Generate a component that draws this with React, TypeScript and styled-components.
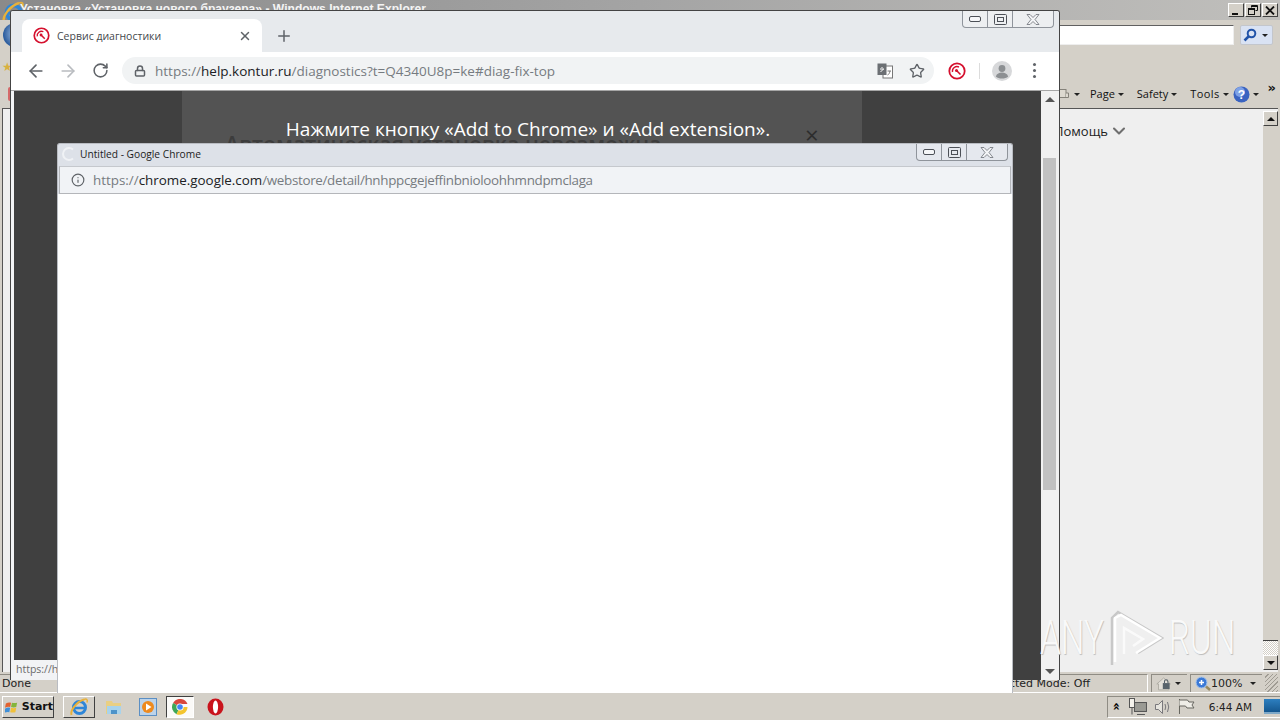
import styled, { createGlobalStyle } from "styled-components"
import { ArrowLeft, ArrowRight, ChevronDown, Info, Lock, Plus, RotateCw, Star, X } from "lucide-react"

const Sans = `"Open Sans", "Liberation Sans", sans-serif`
const Classic = `"DejaVu Sans", "Liberation Sans", sans-serif`
const ClassicGray = "#d4d0c8"

const GlobalStyle = createGlobalStyle`
  html, body {
    margin: 0;
    width: 1280px;
    height: 720px;
    overflow: hidden;
    background: ${ClassicGray};
  }
`

const KonturIcon = ({ size = 18 }: { size?: number }) => (
  <svg width={size} height={size} viewBox="0 0 18 18" fill="none">
    <circle cx="9" cy="9" r="7.700" stroke="#d5102e" strokeWidth="1.800" />
    <path d="M4.500 10a4.600 4.600 0 0 1 6.500-5" stroke="#d5102e" strokeWidth="1.400" />
    <circle cx="8.500" cy="8.500" r="1.500" fill="#d5102e" />
    <path d="M8.500 8.500l4 4" stroke="#d5102e" strokeWidth="1.600" />
  </svg>
)

const TranslateIcon = () => (
  <svg width="16" height="16" viewBox="0 0 16 16">
    <rect x="6" y="3" width="9.500" height="12" fill="#fff" stroke="#777" />
    <rect x="0.500" y="0.500" width="9" height="11.500" fill="#6b6f73" />
    <path d="M3 6h4M5 4v1M3.500 9l3-3" stroke="#fff" strokeWidth="1" fill="none" />
    <path d="M10.500 8h3.500M13 8c-.5 2-1 3.500-2.500 4" stroke="#777" strokeWidth="1" fill="none" />
  </svg>
)

const AvatarIcon = () => (
  <svg width="20" height="20" viewBox="0 0 20 20">
    <circle cx="10" cy="10" r="10" fill="#d7d8da" />
    <circle cx="10" cy="7.500" r="3.400" fill="#8c8f92" />
    <path d="M3.800 15.500c1-3 3.500-4 6.200-4s5.200 1 6.200 4c-1.600 1.400-3.800 2-6.200 2s-4.600-.6-6.200-2z" fill="#8c8f92" />
  </svg>
)

const MinGlyph = () => (
  <svg width="12" height="6" viewBox="0 0 12 6" fill="none">
    <rect x="0.500" y="0.500" width="11" height="5" rx="1.500" stroke="#4c5057" fill="#f5f6f8" />
  </svg>
)

const MaxGlyph = () => (
  <svg width="13" height="11" viewBox="0 0 13 11" fill="none">
    <rect x="0.500" y="0.500" width="12" height="10" rx="1" stroke="#4c5057" />
    <rect x="3.500" y="3.500" width="6" height="4" stroke="#4c5057" />
  </svg>
)

const CloseGlyph = () => (
  <svg width="14" height="11" viewBox="0 0 14 11" fill="#f4f5f7" stroke="#6c7077" strokeWidth="0.800">
    <path d="M1 .5h3l3 3 3-3h3L9 5.500l4 5h-3L7 7.500l-3 3H1l4-5z" />
  </svg>
)

const SpinnerIcon = () => (
  <svg width="14" height="14" viewBox="0 0 14 14" fill="none">
    <path d="M11 2.500A6 6 0 1 0 11 11.500" stroke="#f0f2f5" strokeWidth="2" />
  </svg>
)

const IeLogo = ({ size = 18 }: { size?: number }) => (
  <svg width={size} height={size} viewBox="0 0 20 20" fill="none">
    <circle cx="10.500" cy="10.500" r="6" stroke="#2e86d8" strokeWidth="3" />
    <path d="M4 11h13" stroke="#2e86d8" strokeWidth="2.500" />
    <path d="M2.500 18C1 14 7 5 15 2.500" stroke="#e8b13a" strokeWidth="2" />
    <path d="M15 2.500c2.500-1 4 0 3 3" stroke="#e8b13a" strokeWidth="1.500" />
  </svg>
)

const WinLogo = () => (
  <svg width="17" height="16" viewBox="0 0 17 16">
    <path d="M1 4q3-2 6-1l-1 5q-3-1-6 1z" fill="#e2622f" />
    <path d="M8 3q3 1 6 0l-1 5q-3 1-6 0z" fill="#84b53c" />
    <path d="M0 10q3-2 6-1l-1 5q-3-1-6 1z" fill="#3f8fd8" />
    <path d="M7 9q3 1 6 0l-1 5q-3 1-6 0z" fill="#f0c03a" />
  </svg>
)

const FolderIcon = () => (
  <svg width="18" height="18" viewBox="0 0 18 18">
    <path d="M1 3h6l1 2h8v11H1z" fill="#e9cf83" />
    <path d="M2 8h14v8H2z" fill="#a8d3ec" />
    <path d="M6 16v-4h6v4" fill="#4d93c9" />
  </svg>
)

const MediaIcon = () => (
  <svg width="18" height="18" viewBox="0 0 18 18">
    <rect x="0.500" y="0.500" width="17" height="17" fill="#bcd3ea" stroke="#5b8fc4" />
    <circle cx="9" cy="9" r="6" fill="#ee8a1e" />
    <path d="M7 5.500v7l5.500-3.500z" fill="#fff" />
  </svg>
)

const ChromeLogo = () => (
  <svg width="16" height="16" viewBox="0 0 16 16">
    <path d="M8 8L1.100 4A8 8 0 0 1 15.500 5H8z" fill="#d9473c" />
    <path d="M8 8l-3.500 7.200A8 8 0 0 1 1.100 4z" fill="#3fa757" />
    <path d="M8 8h7.500A8 8 0 0 1 4.500 15.200z" fill="#f4c52e" />
    <circle cx="8" cy="8" r="3.600" fill="#fff" />
    <circle cx="8" cy="8" r="2.800" fill="#4285f4" />
  </svg>
)

const OperaLogo = () => (
  <svg width="17" height="18" viewBox="0 0 17 18">
    <ellipse cx="8.500" cy="9" rx="8" ry="8.500" fill="#c9131c" />
    <ellipse cx="8.500" cy="9" rx="2.600" ry="6.500" fill="#fff" />
  </svg>
)

const NetworkIcon = () => (
  <svg width="20" height="18" viewBox="0 0 20 18" fill="none" stroke="#555">
    <rect x="6.500" y="4.500" width="12" height="9" fill="#9a9a94" />
    <path d="M9 16.500h8" />
    <rect x="1.500" y="0.500" width="5" height="9" fill="#f4f2ec" />
    <path d="M4 9.500v7" />
  </svg>
)

const SpeakerIcon = () => (
  <svg width="18" height="16" viewBox="0 0 18 16" fill="none" stroke="#77767a">
    <path d="M1.500 5.500h3l4-4v13l-4-4h-3z" fill="#e6e4de" />
    <path d="M11 5q1.500 3 0 6M13.500 3q2.500 5 0 10" />
  </svg>
)

const FlagIcon = () => (
  <svg width="18" height="17" viewBox="0 0 18 17" fill="none" stroke="#66655f">
    <path d="M1.500 1v15" />
    <path d="M1.500 2h8l1.500 2h5l-2 3 2 3H9L7.500 8h-6" fill="#efede7" />
  </svg>
)

const HelpIcon = () => (
  <svg width="17" height="17" viewBox="0 0 17 17">
    <circle cx="8.500" cy="8.500" r="8" fill="#3a63c0" />
    <circle cx="7" cy="6" r="5" fill="#7ea1e6" />
    <text x="8.500" y="13" textAnchor="middle" fontSize="12" fontWeight="700" fill="#fff" fontFamily="Liberation Sans">?</text>
  </svg>
)

const SearchGlyph = () => (
  <svg width="14" height="14" viewBox="0 0 14 14" fill="none" stroke="#2052a8" strokeWidth="2">
    <circle cx="8.500" cy="5.500" r="3.800" />
    <path d="M5.500 8.500L1.500 12.500" strokeWidth="2.500" />
  </svg>
)

const ZoomGlyph = () => (
  <svg width="17" height="15" viewBox="0 0 17 15">
    <circle cx="6.500" cy="6.500" r="5.500" fill="#3b79d6" stroke="#a8c5ea" />
    <path d="M4 6.500h5M6.500 4v5" stroke="#fff" strokeWidth="1.500" />
    <path d="M11 10.500l4 3.500" stroke="#9a8a60" strokeWidth="2.500" />
  </svg>
)

const LockHomeGlyph = () => (
  <svg width="20" height="17" viewBox="0 0 20 17">
    <path d="M1 9l8-7 8 7h-2v7H3V9z" fill="#e4e1da" stroke="#a9a69e" />
    <rect x="8" y="8" width="8" height="7" fill="#59646c" />
    <path d="M10 8V6a2 2 0 0 1 4 0v2" stroke="#59646c" strokeWidth="1.200" fill="none" />
  </svg>
)

const RestoreGlyph = () => (
  <svg width="10" height="10" viewBox="0 0 10 10" fill="none" stroke="#111">
    <path d="M3.500 2.500V.5h6v5H7.500" />
    <path d="M3.500 1.500h6" />
    <rect x="0.500" y="3.500" width="6" height="6" />
    <path d="M.5 4.500h6" />
  </svg>
)

const ClassicCloseGlyph = () => (
  <svg width="10" height="9" viewBox="0 0 10 9" stroke="#111" strokeWidth="1.800">
    <path d="M1 .5l8 8M9 .5l-8 8" />
  </svg>
)

const ClassicMinGlyph = () => (
  <svg width="10" height="10" viewBox="0 0 10 10">
    <rect x="1" y="8" width="6" height="2" fill="#111" />
  </svg>
)

const PrintGlyph = () => (
  <svg width="9" height="14" viewBox="0 0 9 14" fill="#ddd9d0" stroke="#85827a">
    <rect x="-6" y="2.500" width="12" height="8" />
    <path d="M6 10.500h2.500V6H6" />
  </svg>
)

const WatermarkPlay = () => (
  <svg width="54" height="56" viewBox="0 0 54 56" fill="none" stroke="#fff" strokeWidth="2.500">
    <path d="M2 55V8L8 2l44 26-24 15" stroke="#c8c8c8" />
    <path d="M5 52V8l6-3 39 23-24 15" />
    <path d="M14 44V18l19 11-10 7" strokeOpacity="0.7" />
  </svg>
)

const Caption = () => (
  <CaptionGroup>
    <CaptionButton $w={24}><MinGlyph /></CaptionButton>
    <CaptionButton $w={25}><MaxGlyph /></CaptionButton>
    <CaptionButton $w={41}><CloseGlyph /></CaptionButton>
  </CaptionGroup>
)

export default function App() {
  return (
    <>
      <GlobalStyle />
      <Desktop>
        <IeWindow>
          <IeTitleBar>
            <IeLogoSlot><IeLogo size={24} /></IeLogoSlot>
            <IeTitle>Установка «Установка нового браузера» - Windows Internet Explorer</IeTitle>
            <ClassicButtons>
              <ClassicButton><ClassicMinGlyph /></ClassicButton>
              <ClassicButton><RestoreGlyph /></ClassicButton>
              <ClassicButton><ClassicCloseGlyph /></ClassicButton>
            </ClassicButtons>
          </IeTitleBar>
          <AddressRow>
            <BackOrb />
            <SearchInput />
            <SearchButton>
              <SearchGlyph />
              <TinyCaret />
            </SearchButton>
          </AddressRow>
          <FavRow>
            <FavStar>★</FavStar>
          </FavRow>
          <CommandRow>
            <RedTab />
            <PrintItem>
              <PrintGlyph />
              <TinyCaret />
            </PrintItem>
            <CommandItems>
              <CommandItem>Page<TinyCaret /></CommandItem>
              <CommandItem>Safety<TinyCaret /></CommandItem>
              <CommandItem>Tools<TinyCaret /></CommandItem>
              <CommandItem><HelpIcon /><TinyCaret /></CommandItem>
              <MoreChevrons>»</MoreChevrons>
            </CommandItems>
          </CommandRow>
          <IeBody>
            <IePage>
              <HelpLink>Помощь<ChevronDown size={20} strokeWidth={2.500} color="#6f6f6f" /></HelpLink>
            </IePage>
            <IeScrollbar>
              <ScrollArrow $dir="up" />
              <IeTrack />
              <IeChecker />
              <ScrollArrow $dir="down" />
            </IeScrollbar>
          </IeBody>
          <StatusBar>
            <StatusMain>
              <span>Done</span>
              <ProtectedMode>Protected Mode: Off</ProtectedMode>
            </StatusMain>
            <StatusCell $w={36}><LockHomeGlyph /><TinyCaret /></StatusCell>
            <StatusCell $w={72}>
              <ZoomGlyph />
              <ZoomValue>100%</ZoomValue>
              <TinyCaret />
            </StatusCell>
            <Grip />
          </StatusBar>
        </IeWindow>

        <Taskbar>
          <StartButton><WinLogo />Start</StartButton>
          <QuickButton><IeLogo size={20} /></QuickButton>
          <QuickIcon><FolderIcon /></QuickIcon>
          <QuickIcon><MediaIcon /></QuickIcon>
          <ActiveTask><ChromeLogo /></ActiveTask>
          <QuickIcon><OperaLogo /></QuickIcon>
          <Tray>
            <TrayChevrons>»</TrayChevrons>
            <NetworkIcon />
            <SpeakerIcon />
            <FlagIcon />
            <Clock>6:44 AM</Clock>
            <ShowDesktop />
          </Tray>
        </Taskbar>

        <ChromeWindow>
          <TabStrip>
            <Tab>
              <KonturIcon size={17} />
              <TabTitle>Сервис диагностики</TabTitle>
              <X size={14} strokeWidth={2.500} color="#5f6368" />
            </Tab>
            <NewTab><Plus size={18} strokeWidth={2} color="#5f6368" /></NewTab>
            <CaptionSlot $right={5}><Caption /></CaptionSlot>
          </TabStrip>
          <Toolbar>
            <NavIcon><ArrowLeft size={20} strokeWidth={2} color="#5f6368" /></NavIcon>
            <NavIcon><ArrowRight size={20} strokeWidth={2} color="#b9bcc0" /></NavIcon>
            <NavIcon><RotateCw size={17} strokeWidth={2.200} color="#5f6368" /></NavIcon>
            <Omnibox>
              <Lock size={12} strokeWidth={3} color="#5f6368" />
              <UrlText><Dim>https://</Dim>help.kontur.ru<Dim>/diagnostics?t=Q4340U8p=ke#diag-fix-top</Dim></UrlText>
              <TranslateIcon />
              <OmniStar><Star size={16} strokeWidth={2} color="#5f6368" /></OmniStar>
            </Omnibox>
            <ToolbarIcons>
              <KonturIcon />
              <ToolbarDivider />
              <AvatarIcon />
              <MenuDots><i /><i /><i /></MenuDots>
            </ToolbarIcons>
          </Toolbar>
          <PageArea>
            <PageDark>
              <Modal>
                <Instruction>Нажмите кнопку «Add to Chrome» и «Add extension».</Instruction>
                <BehindHeading>Автоматическая установка невозможна</BehindHeading>
                <BehindClose>×</BehindClose>
              </Modal>
            </PageDark>
            <PageScrollbar>
              <PageArrow $dir="up" />
              <PageTrack><PageThumb /></PageTrack>
              <PageArrow $dir="down" />
            </PageScrollbar>
          </PageArea>
        </ChromeWindow>

        <LinkTooltip>https://h</LinkTooltip>

        <Popup>
          <PopupTitleBar>
            <SpinnerIcon />
            <PopupTitle>Untitled - Google Chrome</PopupTitle>
            <CaptionSlot $right={4}><Caption /></CaptionSlot>
          </PopupTitleBar>
          <PopupAddress>
            <Info size={14} strokeWidth={2} color="#5f6368" />
            <PopupUrl><Dim>https://</Dim>chrome.google.com<PopupPath>/webstore/detail/hnhppcgejeffinbnioloohhmndpmclaga</PopupPath></PopupUrl>
          </PopupAddress>
          <PopupBody />
        </Popup>

        <Watermark>
          <WatermarkWord>ANY</WatermarkWord>
          <WatermarkPlay />
          <WatermarkWord>RUN</WatermarkWord>
        </Watermark>
      </Desktop>
    </>
  )
}

const Desktop = styled.div`
  position: relative;
  width: 1280px;
  height: 720px;
  overflow: hidden;
  display: flex;
  flex-direction: column;
  background: ${ClassicGray};
  font-family: ${Classic};
`

const IeWindow = styled.div`
  flex: 1;
  min-height: 0;
  display: flex;
  flex-direction: column;
`

const IeTitleBar = styled.div`
  height: 20px;
  flex: none;
  display: flex;
  padding-right: 2px;
  background: linear-gradient(90deg, #8a8a8a, #a4a4a4 50%, #c0bfbc);
  overflow: hidden;
`

const IeLogoSlot = styled.div`
  width: 20px;
  flex: none;
  padding-left: 1px;
  box-sizing: border-box;
`

const IeTitle = styled.div`
  flex: 1;
  color: #f4f4f4;
  font: bold 12.100px/18px "Liberation Sans", sans-serif;
  white-space: nowrap;
`

const ClassicButtons = styled.div`
  display: flex;
  gap: 1px;
  padding-top: 3px;
  height: 14px;
`

const ClassicButton = styled.div`
  width: 16px;
  height: 14px;
  background: ${ClassicGray};
  border: 1px solid;
  border-color: #fff #404040 #404040 #fff;
  box-sizing: border-box;
  display: flex;
  align-items: center;
  justify-content: center;
`

const AddressRow = styled.div`
  height: 30px;
  flex: none;
  display: flex;
  align-items: center;
  padding: 0 7px 0 3px;
`

const BackOrb = styled.div`
  width: 24px;
  height: 24px;
  border-radius: 50%;
  background: radial-gradient(circle at 60% 45%, #bcd5f2, #2f5f9f 70%);
`

const SearchInput = styled.div`
  flex: 1;
  height: 18px;
  margin: 0 6px 0 0;
  background: #fff;
  border: 1px solid;
  border-color: #606060 #eeeeee #eeeeee #606060;
`

const SearchButton = styled.div`
  width: 33px;
  height: 20px;
  box-sizing: border-box;
  display: flex;
  align-items: center;
  justify-content: space-around;
  background: #d9e2f3;
  border: 1px solid #c3c6cc;
  border-radius: 2px;
`

const TinyCaret = styled.span`
  display: inline-block;
  width: 0;
  height: 0;
  margin: 0 2px;
  border-left: 3px solid transparent;
  border-right: 3px solid transparent;
  border-top: 3px solid #222;
`

const FavRow = styled.div`
  height: 28px;
  flex: none;
  padding-left: 2px;
  box-sizing: border-box;
`

const FavStar = styled.div`
  color: #d9b13f;
  font-size: 12px;
  line-height: 34px;
`

const CommandRow = styled.div`
  height: 30px;
  flex: none;
  display: flex;
  align-items: center;
  padding-top: 2px;
  box-sizing: border-box;
`

const RedTab = styled.div`
  width: 3px;
  height: 14px;
  margin-left: 8px;
  border-radius: 2px 0 0 2px;
  background: #d56a6a;
`

const PrintItem = styled.div`
  margin-left: 1049px;
  display: flex;
  align-items: center;
  gap: 3px;
`

const CommandItems = styled.div`
  margin-left: auto;
  display: flex;
  align-items: center;
  gap: 11px;
  padding-right: 4px;
  font: 11px/16px ${Sans};
  color: #111;
`

const CommandItem = styled.div`
  display: flex;
  align-items: center;
  gap: 1px;

  &:nth-child(3) {
    margin-right: -9px;
    letter-spacing: 0.4px;
  }
`

const MoreChevrons = styled.div`
  font: bold 13px/13px ${Classic};
  margin: -14px 0 0 -4px;
`

const IeBody = styled.div`
  flex: 1;
  min-height: 0;
  display: flex;
  margin: 0 2px 2px 2px;
  border-top: 1px solid #555;
  border-left: 1px solid #555;
  background: #efefef;
`

const IePage = styled.div`
  flex: 1;
  padding: 12px 0 0 1051px;
  box-sizing: border-box;
`

const HelpLink = styled.div`
  display: flex;
  align-items: center;
  gap: 1px;
  font: 13px/18px ${Sans};
  color: #222;
`

const IeScrollbar = styled.div`
  width: 15px;
  flex: none;
  display: flex;
  flex-direction: column;
  background: ${ClassicGray};
  margin: 2px 0;
`

const ScrollArrow = styled.div<{ $dir: "up" | "down" }>`
  height: 13px;
  flex: none;
  background: ${ClassicGray};
  border: 1px solid;
  border-color: #fff #404040 #404040 #fff;
  display: flex;
  align-items: center;
  justify-content: center;
  &::after {
    content: "";
    border-left: 4px solid transparent;
    border-right: 4px solid transparent;
    ${(p) => (p.$dir === "up" ? "border-bottom: 4px solid #111;" : "border-top: 4px solid #111;")}
  }
`

const IeTrack = styled.div`
  flex: 1;
  background: ${ClassicGray};
  border-bottom: 1px solid #404040;
`

const IeChecker = styled.div`
  height: 14px;
  flex: none;
  background: repeating-conic-gradient(#fff 0 25%, ${ClassicGray} 0 50%) 0 0 / 2px 2px;
`

const StatusBar = styled.div`
  height: 18px;
  flex: none;
  display: flex;
  gap: 3px;
  font: 11px/18px ${Classic};
  color: #222;
  padding-right: 2px;
`

const StatusMain = styled.div`
  width: 1148px;
  flex: none;
  box-sizing: border-box;
  padding: 0 57px 0 2px;
  display: flex;
  justify-content: space-between;
  border-top: 1px solid #8f8c84;
  border-right: 1px solid #fff;
`

const ProtectedMode = styled.span`
  white-space: nowrap;
`

const StatusCell = styled.div<{ $w: number }>`
  width: ${(p) => p.$w}px;
  flex: none;
  display: flex;
  align-items: center;
  justify-content: space-between;
  padding: 0 4px 0 4px;
  box-sizing: border-box;
  border-top: 1px solid #8f8c84;
  border-left: 1px solid #8f8c84;
`

const ZoomValue = styled.span`
  margin: 0 auto 0 -1px;
`

const Grip = styled.div`
  flex: 1;
  background: repeating-linear-gradient(135deg, transparent 0 2px, #a09c94 2px 3px);
`

const Taskbar = styled.div`
  height: 28px;
  flex: none;
  box-sizing: border-box;
  border-top: 1px solid #fff;
  display: flex;
  align-items: center;
  padding: 0 0 0 2px;
  background: ${ClassicGray};
`

const StartButton = styled.div`
  width: 52px;
  height: 22px;
  box-sizing: border-box;
  display: flex;
  align-items: center;
  gap: 2px;
  padding-left: 2px;
  border: 1px solid;
  border-color: #fff #404040 #404040 #fff;
  font: bold 11px/20px ${Classic};
  color: #111;
`

const QuickButton = styled.div`
  width: 32px;
  height: 22px;
  margin-left: 9px;
  box-sizing: border-box;
  display: flex;
  align-items: center;
  justify-content: center;
  border: 1px solid;
  border-color: #fff #404040 #404040 #fff;
`

const QuickIcon = styled.div`
  width: 18px;
  height: 20px;
  margin-left: 10px;
  display: flex;
  align-items: center;
  justify-content: center;

  & + & {
    margin-left: 16px;
  }
`

const ActiveTask = styled.div`
  width: 28px;
  height: 22px;
  margin: 0 2px 0 9px;
  box-sizing: border-box;
  display: flex;
  align-items: center;
  justify-content: center;
  background: #fbfaf8;
  border: 1px solid;
  border-color: #404040 #fff #fff #404040;
`

const Tray = styled.div`
  margin-left: auto;
  width: 173px;
  height: 22px;
  box-sizing: border-box;
  display: flex;
  align-items: center;
  gap: 6px;
  padding-left: 2px;
  border: 1px solid;
  border-color: #8f8c84 #fff #fff #8f8c84;
  border-right: none;
`

const TrayChevrons = styled.div`
  transform: rotate(-90deg);
  font: bold 13px/13px ${Classic};
  width: 12px;
  text-align: center;
`

const Clock = styled.div`
  margin-left: 7px;
  font: 10.500px/16px ${Classic};
  color: #222;
  white-space: nowrap;
`

const ShowDesktop = styled.div`
  width: 16px;
  height: 13px;
  margin-left: 6px;
  background: linear-gradient(#2d7fc0, #15578f);
  border-bottom: 2px solid #7fa9c8;
`

const ChromeWindow = styled.div`
  position: absolute;
  left: 10px;
  top: 10px;
  width: 1050px;
  height: 670px;
  box-sizing: border-box;
  display: flex;
  flex-direction: column;
  background: #f3f4f6;
  border: 1px solid #444;
  border-bottom: none;
  border-radius: 3px 3px 0 0;
  overflow: hidden;
`

const TabStrip = styled.div`
  height: 41px;
  flex: none;
  position: relative;
  display: flex;
  align-items: flex-end;
  padding-left: 11px;
  background: #e7eaed;
`

const Tab = styled.div`
  width: 240px;
  height: 33px;
  box-sizing: border-box;
  display: flex;
  align-items: center;
  padding: 0 10px 0 11px;
  background: #fff;
  border-radius: 8px 8px 0 0;
`

const TabTitle = styled.div`
  flex: 1;
  margin-left: 7px;
  font: 10.500px/16px ${Sans};
  color: #45484c;
  white-space: nowrap;
`

const NewTab = styled.div`
  width: 18px;
  height: 33px;
  margin-left: 13px;
  display: flex;
  align-items: center;
  justify-content: center;
`

const CaptionSlot = styled.div<{ $right: number }>`
  position: absolute;
  top: 0;
  right: ${(p) => p.$right}px;
`

const CaptionGroup = styled.div`
  display: flex;
  height: 17px;
  box-sizing: border-box;
  background: rgba(255, 255, 255, 0.25);
  border: 1px solid #8f949b;
  border-top: none;
  border-radius: 0 0 4px 4px;
`

const CaptionButton = styled.div<{ $w: number }>`
  width: ${(p) => p.$w}px;
  box-sizing: border-box;
  display: flex;
  align-items: center;
  justify-content: center;

  & + & {
    border-left: 1px solid #8f949b;
  }
`

const Toolbar = styled.div`
  height: 39px;
  flex: none;
  box-sizing: border-box;
  display: flex;
  align-items: center;
  padding: 0 15px 1px 9px;
  background: #fff;
  border-bottom: 1px solid #a6a6a6;
`

const NavIcon = styled.div`
  width: 32px;
  display: flex;
  justify-content: center;
`

const Omnibox = styled.div`
  width: 812px;
  height: 27px;
  flex: none;
  margin-left: 6px;
  box-sizing: border-box;
  display: flex;
  align-items: center;
  padding: 0 9px 0 12px;
  background: #f1f3f4;
  border-radius: 14px;
`

const UrlText = styled.div`
  flex: 1;
  margin-left: 9px;
  font: 13.500px/18px ${Sans};
  color: #202124;
  white-space: nowrap;
  overflow: hidden;
`

const OmniStar = styled.div`
  display: flex;
  margin-left: 16px;
`

const Dim = styled.span`
  color: #767b80;
`

const ToolbarIcons = styled.div`
  flex: 1;
  display: flex;
  align-items: center;
  padding-left: 14px;
`

const ToolbarDivider = styled.div`
  width: 1px;
  height: 16px;
  margin: 0 12px 0 13px;
  background: #dcdcdc;
`

const MenuDots = styled.div`
  margin-left: 21px;
  display: flex;
  flex-direction: column;
  gap: 3px;

  i {
    display: block;
    width: 3px;
    height: 3px;
    border-radius: 50%;
    background: #5f6368;
  }
`

const PageArea = styled.div`
  flex: 1;
  min-height: 0;
  display: flex;
  padding-left: 3px;
`

const PageDark = styled.div`
  flex: 1;
  min-width: 0;
  background: #404040;
`

const Modal = styled.div`
  position: relative;
  width: 680px;
  height: 100%;
  margin-left: 168px;
  background: #535353;
  overflow: hidden;
`

const Instruction = styled.div`
  position: absolute;
  z-index: 1;
  left: 0;
  right: 0;
  top: 24px;
  padding-left: 12px;
  box-sizing: border-box;
  text-align: center;
  font: 400 19px/28px ${Sans};
  color: #fff;
  white-space: nowrap;
`

const BehindHeading = styled.div`
  position: absolute;
  left: 43px;
  top: 38px;
  font: 600 21.400px/30px ${Sans};
  color: #3c3c3c;
  white-space: nowrap;
`

const BehindClose = styled.div`
  position: absolute;
  left: 623px;
  top: 30px;
  font: 24px/28px ${Sans};
  color: #2d2d2d;
`

const PageScrollbar = styled.div`
  width: 18px;
  flex: none;
  display: flex;
  flex-direction: column;
  background: #f1f1f1;
`

const PageArrow = styled.div<{ $dir: "up" | "down" }>`
  height: 17px;
  flex: none;
  display: flex;
  align-items: center;
  justify-content: center;
  &::after {
    content: "";
    border-left: 5px solid transparent;
    border-right: 5px solid transparent;
    ${(p) => (p.$dir === "up" ? "border-bottom: 5px solid #555;" : "border-top: 5px solid #555;")}
  }
`

const PageTrack = styled.div`
  flex: 1;
  padding: 50px 3px 0 2px;
`

const PageThumb = styled.div`
  height: 332px;
  background: #c1c1c1;
`

const LinkTooltip = styled.div`
  position: absolute;
  left: 11px;
  top: 660px;
  width: 46px;
  height: 20px;
  box-sizing: border-box;
  padding-left: 5px;
  overflow: hidden;
  background: #f2f3f5;
  font: 10.500px/18px ${Sans};
  color: #6a6a6a;
  white-space: nowrap;
`

const Popup = styled.div`
  position: absolute;
  left: 57px;
  top: 143px;
  width: 956px;
  height: 550px;
  box-sizing: border-box;
  display: flex;
  flex-direction: column;
  background: #dde1e8;
  border: 1px solid #b9bcc2;
  border-bottom: none;
  border-radius: 3px 3px 0 0;
`

const PopupTitleBar = styled.div`
  height: 22px;
  flex: none;
  position: relative;
  display: flex;
  align-items: center;
  padding: 0 0 2px 4px;
  box-sizing: border-box;
`

const PopupTitle = styled.div`
  margin-left: 4px;
  font: 10.200px/14px ${Sans};
  color: #1c1c1c;
  white-space: nowrap;
`

const PopupAddress = styled.div`
  height: 28px;
  flex: none;
  margin: 0 1px;
  box-sizing: border-box;
  display: flex;
  align-items: center;
  padding-left: 11px;
  background: #f1f3f6;
  border: 1px solid #b4b6ba;
  border-top-color: #c5c8cd;
`

const PopupUrl = styled.div`
  margin-left: 8px;
  font: 13.400px/18px ${Sans};
  color: #202124;
  white-space: nowrap;
`

const PopupPath = styled(Dim)`
  letter-spacing: -0.32px;
`

const PopupBody = styled.div`
  flex: 1;
  background: #fff;
`

const Watermark = styled.div`
  position: absolute;
  left: 1042px;
  top: 610px;
  width: 190px;
  height: 56px;
  display: flex;
  align-items: center;
  justify-content: space-between;
  pointer-events: none;
`

const WatermarkWord = styled.div`
  width: 60px;
  display: flex;
  justify-content: center;
  font: 300 49px/56px Roboto, sans-serif;
  color: #f9f9f9;
  transform: scaleX(0.68);
  text-shadow: 1px 1px 1px #bdbdbd;
`
